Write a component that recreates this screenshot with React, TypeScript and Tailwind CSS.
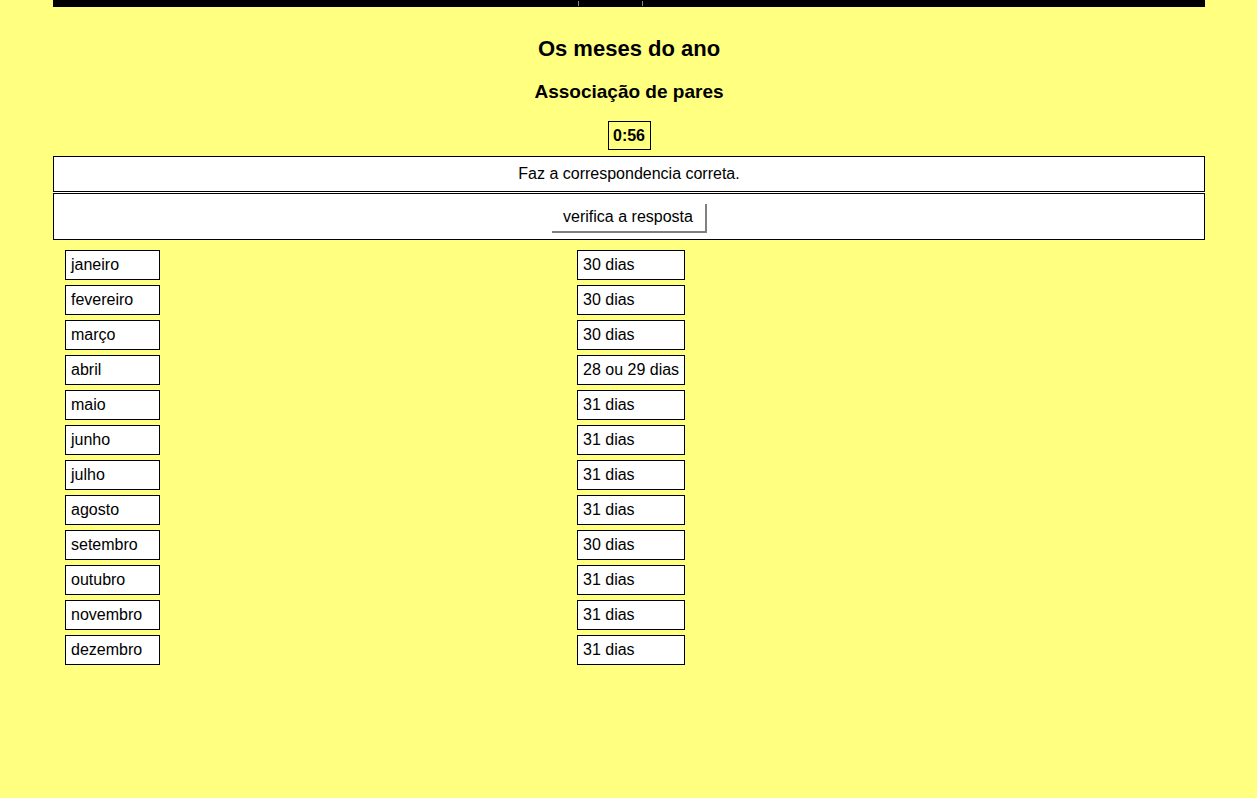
import React from "react";

const left = ["janeiro","fevereiro","março","abril","maio","junho","julho","agosto","setembro","outubro","novembro","dezembro"];
const right = ["30 dias","30 dias","30 dias","28 ou 29 dias","31 dias","31 dias","31 dias","31 dias","30 dias","31 dias","31 dias","31 dias"];

export default function App() {
  return (
    <div className="min-h-[798px] bg-[#ffff80] text-black" style={{ fontFamily: '"Liberation Sans", Arial, sans-serif' }}>
      <div className="mx-[53px] w-[1152px]">
        <div className="relative h-[7px] bg-black">
          <div className="absolute left-[525px] top-[1px] h-[5px] w-[1px] bg-[#888]" />
          <div className="absolute left-[589px] top-[1px] h-[5px] w-[1px] bg-[#888]" />
        </div>
        <h1 className="mt-[29px] text-center text-[22px] font-bold leading-[26px]">Os meses do ano</h1>
        <h2 className="mt-[18px] text-center text-[19px] font-bold leading-[23px]">Associação de pares</h2>
        <div className="mt-[18px] flex justify-center">
          <div className="flex h-[29px] w-[43px] items-center justify-center border border-black text-[16px] font-bold">0:56</div>
        </div>
        <div className="mt-[6px] flex flex-col gap-[1px] bg-white">
          <div className="flex h-[36px] items-center justify-center border border-black bg-white text-[16px]">
            Faz a correspondencia correta.
          </div>
          <div className="flex h-[47px] items-center justify-center border border-black bg-white">
            <button className="mt-[3px] h-[29px] w-[155px] border-b-2 border-r-2 border-[#808080] bg-white text-[16px] leading-[20px]">verifica a resposta</button>
          </div>
        </div>
        <div className="mt-[10px] flex pl-[12px]">
          <div className="flex w-[512px] flex-col gap-[5px]">
            {left.map((t, i) => (
              <div key={i} className="flex h-[30px] w-[95px] items-center border border-black bg-white pl-[5px] text-[16px]">{t}</div>
            ))}
          </div>
          <div className="flex flex-col gap-[5px]">
            {right.map((t, i) => (
              <div key={i} className="flex h-[30px] w-[108px] items-center border border-black bg-white pl-[5px] text-[16px]">{t}</div>
            ))}
          </div>
        </div>
      </div>
    </div>
  );
}
